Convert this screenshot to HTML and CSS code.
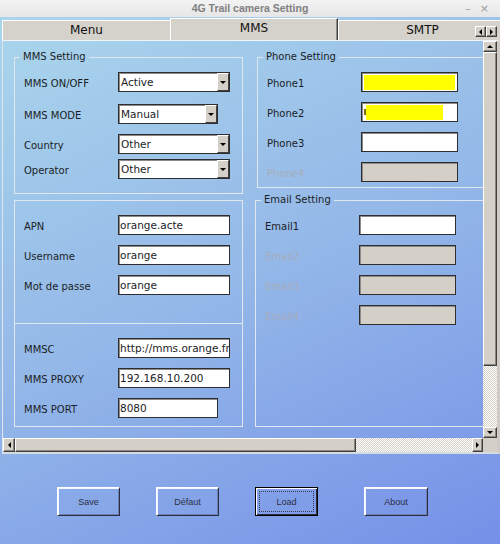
FILE: index.html
```html
<!DOCTYPE html>
<html>
<head>
<meta charset="utf-8">
<link rel="stylesheet" href="styles.css">
</head>
<body>
<div class="titlebar">
  <div></div>
  <div class="title">4G Trail camera Setting</div>
  <div class="controls"><span>–</span><span>×</span></div>
</div>
<div class="tabstrip">
  <div class="tab">Menu</div>
  <div class="tab active">MMS</div>
  <div class="tab">SMTP</div>
  <div class="tabarrows">
    <span class="sbtn small"><i class="tri left"></i></span>
    <span class="sbtn small"><i class="tri right"></i></span>
  </div>
</div>
<div class="panel">
  <div class="viewport">
    <div class="col">
      <fieldset class="grp mms">
        <legend>MMS Setting</legend>
        <div class="rows">
          <span class="lbl">MMS ON/OFF</span>
          <div class="combo w112"><span class="val">Active</span><span class="drop"><i class="tri down"></i></span></div>
          <span class="lbl">MMS MODE</span>
          <div class="combo w100"><span class="val">Manual</span><span class="drop"><i class="tri down"></i></span></div>
          <span class="lbl">Country</span>
          <div class="combo w112"><span class="val">Other</span><span class="drop"><i class="tri down"></i></span></div>
          <span class="lbl">Operator</span>
          <div class="combo w112"><span class="val">Other</span><span class="drop"><i class="tri down"></i></span></div>
        </div>
      </fieldset>
      <div class="box apn">
        <div class="rows">
          <span class="lbl">APN</span>
          <div class="field w112">orange.acte</div>
          <span class="lbl">Username</span>
          <div class="field w112">orange</div>
          <span class="lbl">Mot de passe</span>
          <div class="field w112">orange</div>
        </div>
      </div>
      <div class="box mmsc">
        <div class="rows">
          <span class="lbl">MMSC</span>
          <div class="field w112">http://mms.orange.fr</div>
          <span class="lbl">MMS PROXY</span>
          <div class="field w112">192.168.10.200</div>
          <span class="lbl">MMS PORT</span>
          <div class="field w100">8080</div>
        </div>
      </div>
    </div>
    <div class="col">
      <fieldset class="grp phone">
        <legend>Phone Setting</legend>
        <div class="rows">
          <span class="lbl">Phone1</span>
          <div class="field w97"><span class="hl hl1"></span></div>
          <span class="lbl">Phone2</span>
          <div class="field w97"><span class="caret"></span><span class="hl hl2"></span></div>
          <span class="lbl">Phone3</span>
          <div class="field w97"></div>
          <span class="lbl off">Phone4</span>
          <div class="field w97 disabled"></div>
        </div>
      </fieldset>
      <fieldset class="grp email">
        <legend>Email Setting</legend>
        <div class="rows">
          <span class="lbl">Email1</span>
          <div class="field w97"></div>
          <span class="lbl off">Email2</span>
          <div class="field w97 disabled"></div>
          <span class="lbl off">Email3</span>
          <div class="field w97 disabled"></div>
          <span class="lbl off">Email4</span>
          <div class="field w97 disabled"></div>
        </div>
      </fieldset>
    </div>
  </div>
  <div class="vscroll">
    <span class="sbtn vb"><i class="tri up"></i></span>
    <span class="thumb vthumb"></span>
    <span class="track"></span>
    <span class="sbtn vb"><i class="tri down"></i></span>
  </div>
  <div class="hscroll">
    <span class="sbtn hbl"><i class="tri left"></i></span>
    <span class="thumb hthumb"></span>
    <span class="track"></span>
    <span class="sbtn hbr"><i class="tri right"></i></span>
  </div>
  <div class="corner"></div>
</div>
<div class="actions">
  <button class="btn">Save</button>
  <button class="btn">Défaut</button>
  <button class="btn focus"><span>Load</span></button>
  <button class="btn about">About</button>
</div>
</body>
</html>
```
FILE: styles.css
```css
* { box-sizing: border-box; }
html, body { margin: 0; padding: 0; }
body {
  width: 500px;
  height: 544px;
  overflow: hidden;
  font-family: "DejaVu Sans", sans-serif;
  color: #1b1d26;
  background: linear-gradient(155deg, #abd7ec 0%, #94b8e8 50%, #7590e8 100%);
}

.titlebar {
  height: 17px;
  background: linear-gradient(#f3f3f3, #e6e6e6);
  display: grid;
  grid-template-columns: 1fr auto 1fr;
  align-items: center;
}
.title { font: bold 10.5px/17px "Liberation Sans", sans-serif; color: #808080; }
.controls {
  display: flex;
  justify-content: flex-end;
  gap: 9px;
  padding-right: 11px;
  font: 11px/17px "DejaVu Sans", sans-serif;
  color: #9a9a9a;
}

.tabstrip {
  position: relative;
  height: 23px;
  display: flex;
  align-items: flex-end;
  padding-left: 2px;
  overflow: hidden;
}
.tab {
  flex: 0 0 168px;
  height: 20px;
  background: #d5d2cb;
  border-top: 1px solid #fff;
  border-left: 1px solid #fff;
  font-size: 12px;
  line-height: 19px;
  text-align: center;
  color: #111;
}
.tab.active {
  height: 22px;
  border-right: 1px solid #404040;
  box-shadow: inset -1px 0 0 #8a8a8a;
}
.tabarrows {
  position: absolute;
  right: 3px;
  top: 9px;
  display: flex;
}

.sbtn {
  display: flex;
  align-items: center;
  justify-content: center;
  background: #d4d0c8;
  border: 1px solid;
  border-color: #fff #404040 #404040 #fff;
  box-shadow: inset -1px -1px 0 #8a8780;
}
.sbtn.small { width: 11px; height: 11px; }

.tri { display: block; width: 0; height: 0; border: 3px solid transparent; }
.tri.up { border-top: 0; border-bottom-color: #000; }
.tri.down { border-bottom: 0; border-top-color: #000; }
.tri.left { border-left: 0; border-right-color: #000; }
.tri.right { border-right: 0; border-left-color: #000; }

.panel {
  margin-left: 2px;
  width: 498px;
  display: grid;
  grid-template-columns: 480px 14px;
  grid-template-rows: 397px 14px;
  border-top: 1px solid #f2f5f8;
  border-left: 1px solid #dfe6ee;
  border-right: 3px solid #cfcbc4;
  border-bottom: 2px solid #d6dbe2;
}
.viewport {
  overflow: hidden;
  display: grid;
  grid-template-columns: 229px 232px;
  column-gap: 12px;
  padding: 10px 0 0 11px;
  align-items: start;
}
.col { display: flex; flex-direction: column; }

.grp {
  margin: 0;
  padding: 0;
  min-width: 0;
  border: 1px solid #e1e7ee;
}
.grp legend {
  margin-left: 5px;
  padding: 0 3px;
  font-size: 10px;
  line-height: 12px;
  color: #1b1d26;
}
.box { border: 1px solid #e1e7ee; }

.rows {
  display: grid;
  grid-template-columns: 94px auto;
  padding-left: 9px;
  align-items: start;
}
.lbl {
  font-size: 10px;
  line-height: 20px;
  padding-top: 2px;
  white-space: nowrap;
}
.lbl.off { color: #a5adbc; }

.mms .rows { grid-template-rows: 32px 30px 25px 20px; padding-top: 9px; padding-bottom: 14px; }
.apn { height: 124px; margin-top: 6px; }
.apn .rows, .mmsc .rows { grid-template-rows: 30px 30px 20px; padding-top: 14px; }
.mmsc { height: 104px; margin-top: -1px; }
.phone { margin-left: 2px; }
.phone .rows { grid-template-rows: 30px 30px 30px 20px; padding-top: 9px; padding-bottom: 5px; }
.email { margin-top: 6px; }
.email .rows { grid-template-rows: 30px 30px 30px 20px; padding-top: 9px; padding-bottom: 101px; }

.w112 { width: 112px; }
.w100 { width: 100px; }
.w97 { width: 97px; }

.field, .combo {
  height: 20px;
  background: #fff;
  border: 1px solid #2e2e2e;
  box-shadow: inset 1px 1px 0 #8a8a8a;
  font-size: 10.5px;
  line-height: 18px;
  white-space: nowrap;
  overflow: hidden;
}
.field { padding-left: 1px; display: flex; align-items: center; }
.field.disabled { background: #d4d0c8; }
.combo { display: flex; }
.combo .val { flex: 1; padding-left: 2px; }
.combo .drop {
  width: 12px;
  display: flex;
  align-items: center;
  justify-content: center;
  background: #d4d0c8;
  border: 1px solid;
  border-color: #fff #404040 #404040 #fff;
}

.hl { display: block; height: 15px; background: #ffff00; }
.hl1 { width: 91px; margin-left: 1px; }
.hl2 { width: 77px; }
.caret { display: block; width: 2px; height: 6px; margin-left: 1px; background: #7a6a10; }

.vscroll { display: flex; flex-direction: column; }
.vb { height: 11px; }
.thumb {
  background: #d4d0c8;
  border: 1px solid;
  border-color: #fff #404040 #404040 #fff;
  box-shadow: inset -1px -1px 0 #8a8780;
}
.vthumb { height: 314px; }
.track {
  flex: 1;
  background: repeating-conic-gradient(#d4d0c8 0 25%, #ffffff 0 50%) 0 0 / 2px 2px;
}
.hscroll { display: flex; }
.hbl { width: 12px; }
.hthumb { width: 341px; }
.hbr { width: 11px; }
.corner { background: #d4d0c8; }

.actions {
  display: flex;
  gap: 36px;
  padding-left: 57px;
  margin-top: 33px;
}
.btn {
  width: 63px;
  height: 29px;
  margin: 0;
  padding: 0;
  background: transparent;
  border: 1px solid;
  border-color: #fff #2a2e3e #2a2e3e #fff;
  box-shadow: inset 1px 1px 0 #f4f6fb, inset -1px -1px 0 #6b7fb4;
  font: 9px "Liberation Sans", sans-serif;
  color: #2a2f45;
  display: flex;
  align-items: center;
  justify-content: center;
}
.btn.about { margin-left: 10px; width: 64px; }
.btn.focus {
  border-color: #000;
  box-shadow: inset 1px 1px 0 #fff, inset -1px -1px 0 #2a2e3e;
  padding: 3px;
}
.btn.focus span {
  flex: 1;
  align-self: stretch;
  border: 1px dotted #3a3a4a;
  display: flex;
  align-items: center;
  justify-content: center;
}
```
